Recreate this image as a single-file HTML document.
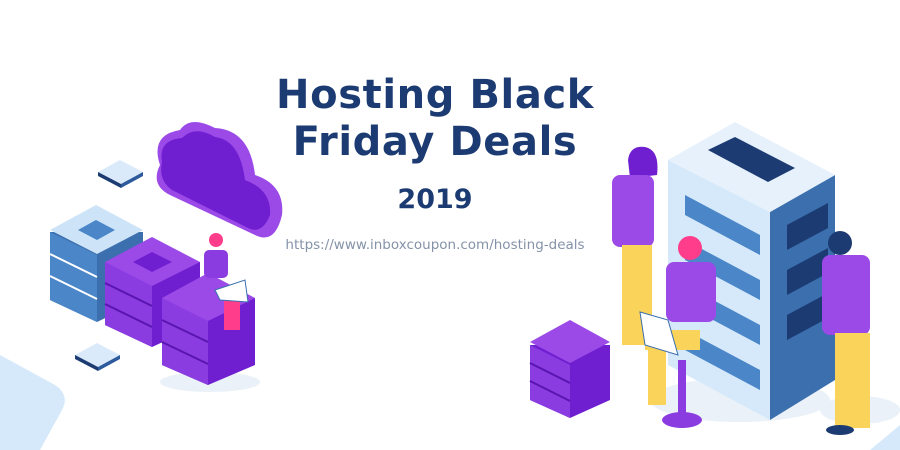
<!DOCTYPE html>
<html><head><meta charset="utf-8"><style>
html,body{margin:0;padding:0;background:#fff;width:900px;height:450px;overflow:hidden}
.t{position:absolute;left:0;width:870px;text-align:center;font-family:"DejaVu Sans","Liberation Sans",sans-serif;font-weight:bold;color:#1c3b72}
</style></head><body>
<svg width="900" height="450" style="position:absolute;left:0;top:0">
<path d="M0 355 L55 385 Q70 395 62 410 L40 450 L0 450Z" fill="#d6e9fb"/>
<path d="M870 450 L900 425 L900 450Z" fill="#d6e9fb"/>
<ellipse cx="130" cy="300" rx="60" ry="14" fill="#eaf1f8"/>
<ellipse cx="210" cy="382" rx="50" ry="10" fill="#eaf1f8"/>
<ellipse cx="740" cy="400" rx="90" ry="22" fill="#eaf1f8"/>
<ellipse cx="860" cy="410" rx="40" ry="14" fill="#eaf1f8"/>
<polygon points="98,172 120,160 143,172 121,184" fill="#dbeafb"/>
<polygon points="98,172 121,184 121,188 98,176" fill="#1c3b72"/>
<polygon points="121,184 143,172 143,176 121,188" fill="#2d5a9c"/>
<polygon points="75,355 97,343 120,355 98,367" fill="#dbeafb"/>
<polygon points="75,355 98,367 98,371 75,359" fill="#1c3b72"/>
<polygon points="98,367 120,355 120,359 98,371" fill="#2d5a9c"/>
<polygon points="50,232 50,300 97,322 143,300 143,232" fill="#3b6fae"/>
<polygon points="50,232 97,255 97,322 50,300" fill="#4a86c8"/>
<g stroke="#fff" stroke-width="2"><line x1="50" y1="254" x2="97" y2="277"/><line x1="50" y1="276" x2="97" y2="299"/></g>
<polygon points="50,230 96,205 143,230 97,254" fill="#cde3f8"/>
<polygon points="78,230 96,220 115,230 97,240" fill="#4a86c8"/>
<polygon points="105,262 105,325 152,347 200,325 200,262" fill="#6f1fd0"/>
<polygon points="105,262 152,285 152,347 105,325" fill="#8a3ce0"/>
<g stroke="#5a14b0" stroke-width="2"><line x1="105" y1="283" x2="152" y2="306"/><line x1="105" y1="304" x2="152" y2="327"/></g>
<polygon points="105,262 152,237 200,262 152,286" fill="#9b4ae8"/>
<polygon points="133,262 152,252 172,262 152,272" fill="#6f1fd0"/>
<polygon points="162,298 162,365 208,385 255,365 255,298" fill="#6f1fd0"/>
<polygon points="162,298 208,320 208,385 162,365" fill="#8a3ce0"/>
<g stroke="#5a14b0" stroke-width="2"><line x1="162" y1="320" x2="208" y2="342"/><line x1="162" y1="342" x2="208" y2="364"/></g>
<polygon points="162,298 208,273 255,298 208,321" fill="#9b4ae8"/>
<path d="M160 165 Q150 135 180 130 Q190 115 215 128 Q250 130 255 175 Q285 185 282 215 Q275 245 255 235 L170 195 Q150 185 160 165Z" fill="#9b4ae8"/>
<path d="M162 162 Q158 140 182 138 Q195 125 215 137 Q240 140 245 180 Q272 190 270 215 Q262 235 248 228 L172 190 Q158 180 162 162Z" fill="#6f1fd0"/>
<circle cx="216" cy="240" r="7" fill="#ff3d8b"/>
<rect x="204" y="250" width="24" height="28" rx="5" fill="#8a3ce0"/>
<rect x="224" y="290" width="16" height="40" fill="#ff3d8b"/>
<polygon points="215,290 245,280 248,302 220,300" fill="#fff" stroke="#3b6fae"/>
<polygon points="530,345 530,400 570,418 610,400 610,345" fill="#6f1fd0"/>
<polygon points="530,345 570,365 570,418 530,400" fill="#8a3ce0"/>
<g stroke="#5a14b0" stroke-width="2"><line x1="530" y1="363" x2="570" y2="383"/><line x1="530" y1="381" x2="570" y2="401"/></g>
<polygon points="530,342 570,320 610,342 570,363" fill="#9b4ae8"/>
<polygon points="770,212 835,175 835,380 770,420" fill="#3b6fae"/>
<polygon points="668,160 770,212 770,420 668,365" fill="#d6e9fb"/>
<polygon points="668,160 735,122 835,175 770,212" fill="#e6f1fc"/>
<polygon points="708,150 735,137 795,168 768,182" fill="#1c3b72"/>
<g fill="#4a86c8"><polygon points="685,195 760,235 760,255 685,215"/><polygon points="685,240 760,280 760,300 685,260"/><polygon points="685,285 760,325 760,345 685,305"/><polygon points="685,330 760,370 760,390 685,350"/></g>
<g fill="#1c3b72"><polygon points="787,225 828,203 828,228 787,250"/><polygon points="787,270 828,248 828,273 787,295"/><polygon points="787,315 828,293 828,318 787,340"/></g>
<path d="M628 160 Q630 145 645 147 Q660 150 657 175 L630 178Z" fill="#6f1fd0"/>
<rect x="612" y="175" width="42" height="72" rx="8" fill="#9b4ae8"/>
<rect x="622" y="245" width="30" height="100" fill="#fad35a"/>
<circle cx="690" cy="248" r="12" fill="#ff3d8b"/>
<rect x="666" y="262" width="50" height="60" rx="8" fill="#9b4ae8"/>
<rect x="645" y="330" width="55" height="20" fill="#fad35a"/>
<rect x="648" y="345" width="18" height="60" fill="#fad35a"/>
<polygon points="640,312 668,320 678,355 645,345" fill="#fff" stroke="#3b6fae"/>
<rect x="678" y="360" width="8" height="55" fill="#8a3ce0"/>
<ellipse cx="682" cy="420" rx="20" ry="8" fill="#8a3ce0"/>
<circle cx="840" cy="243" r="12" fill="#1c3b72"/>
<rect x="822" y="255" width="48" height="80" rx="8" fill="#9b4ae8"/>
<rect x="835" y="333" width="35" height="95" fill="#fad35a"/>
<ellipse cx="840" cy="430" rx="14" ry="5" fill="#1c3b72"/>
</svg>
<div class="t" style="top:72px;font-size:40px;line-height:46px;letter-spacing:0.6px">Hosting Black</div>
<div class="t" style="top:119px;font-size:40px;line-height:46px;letter-spacing:0.6px">Friday Deals</div>
<div class="t" style="top:183px;font-size:27px;line-height:34px">2019</div>
<div class="t" style="top:237px;font-size:13.5px;font-weight:normal;color:#8593a8">https://www.inboxcoupon.com/hosting-deals</div>
</body></html>
